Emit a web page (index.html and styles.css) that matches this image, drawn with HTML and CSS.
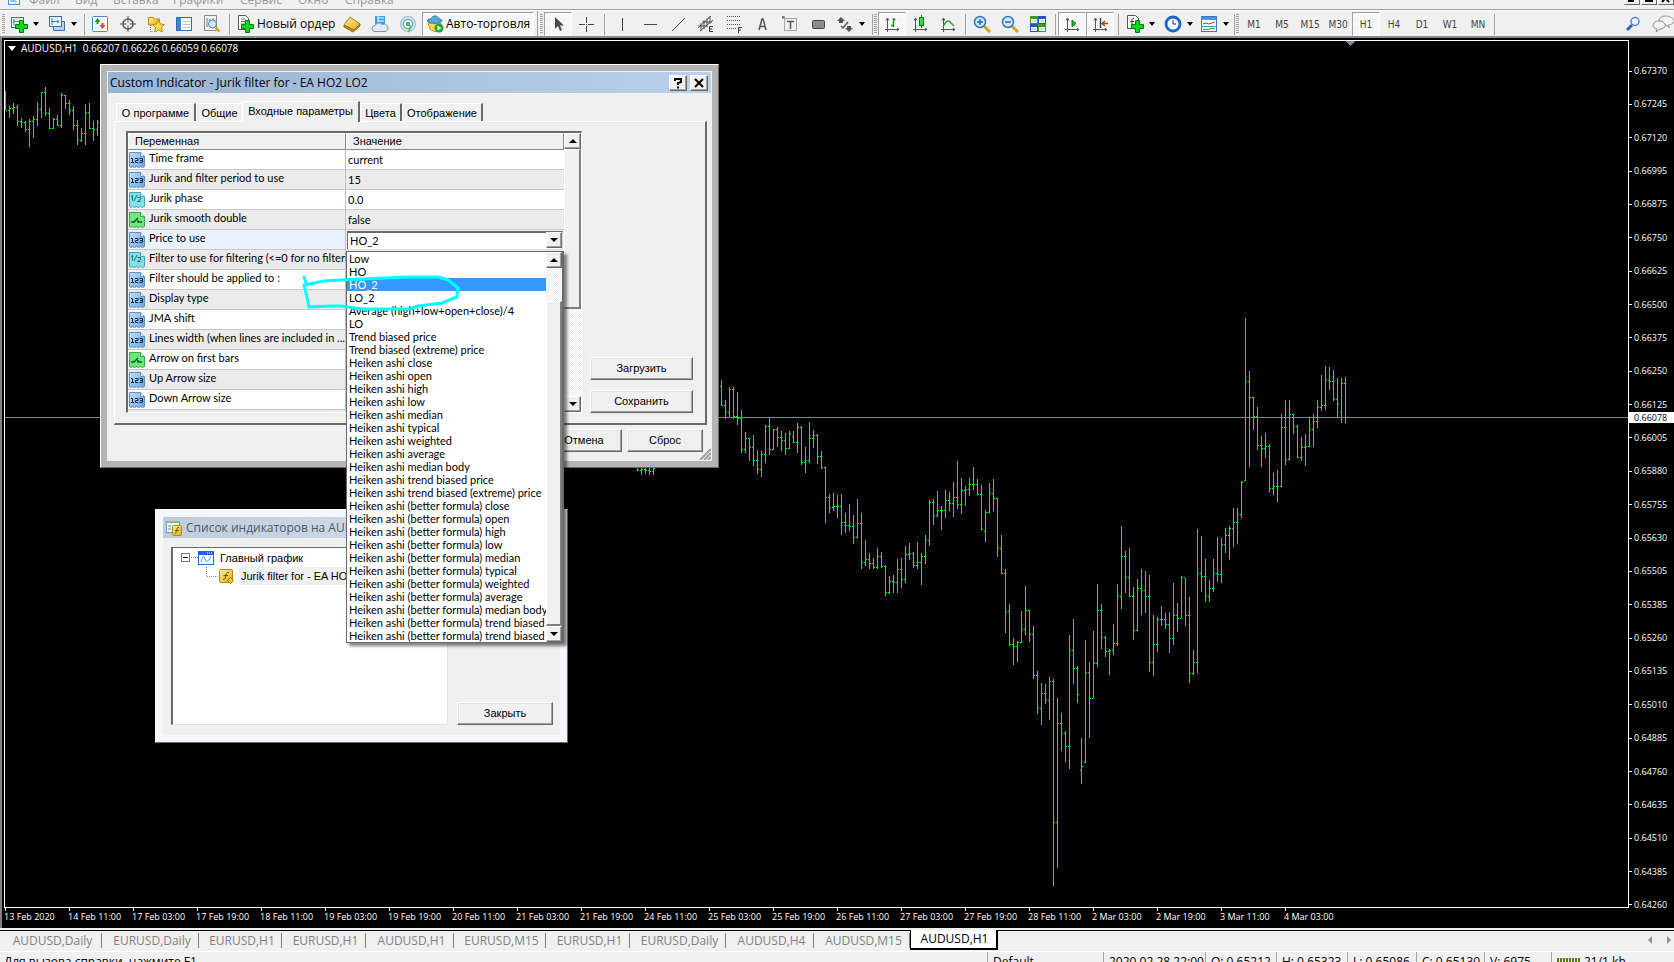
FILE: index.html
```html
<!DOCTYPE html>
<html lang="ru">
<head>
<meta charset="utf-8">
<title>AUDUSD,H1</title>
<link rel="stylesheet" href="styles.css">
</head>
<body>
<svg class="defs" aria-hidden="true">
  <defs>
    <linearGradient id="g-blue" x1="0" y1="0" x2="1" y2="1"><stop offset="0" stop-color="#c4ddf6"/><stop offset="1" stop-color="#6ba3dd"/></linearGradient>
    <linearGradient id="g-gold" x1="0" y1="0" x2="1" y2="1"><stop offset="0" stop-color="#fff0a0"/><stop offset="1" stop-color="#e0a81c"/></linearGradient>
    <symbol id="i-plus" viewBox="0 0 18 18"><path d="M9 7h4v4h4v4h-4v4h-4v-4H5v-4h4z" transform="translate(.5 -1.5)" fill="#10d820" stroke="#067a10"/></symbol>
    <symbol id="i-123" viewBox="0 0 16 16"><path d="M.5.5h11l4 4v10l-2 1-2-1-2 1-2-1-2 1-2-1-2 1-1-1z" fill="url(#g-blue)" stroke="#5b8fc4"/><path d="M11.500.5v4h4" fill="#e8f3fd" stroke="#5b8fc4"/><path d="M2 6.500h1.500v4M2 10.500h3M6 6.500h3v2H6.500v2H9M10.500 6.500h3v4h-3M11 8.500h2" fill="none" stroke="#0c2c54"/></symbol>
    <symbol id="i-half" viewBox="0 0 16 16"><path d="M.5.5h11l4 4v10l-2 1-2-1-2 1-2-1-2 1-2-1-2 1-1-1z" fill="#86dde6" stroke="#44a5b4"/><path d="M11.500.5v4h4" fill="#e8fbfd" stroke="#44a5b4"/><path d="M2 4.500l1.500-1v5M8 3L5 9M8.500 5.500h3v2l-3 2h3" fill="none" stroke="#1d6c80"/></symbol>
    <symbol id="i-bool" viewBox="0 0 16 16"><path d="M.5.5h11l4 4v10l-2 1-2-1-2 1-2-1-2 1-2-1-2 1-1-1z" fill="#6fe57f" stroke="#36a74a"/><path d="M11.500.5v4h4" fill="#d8fadd" stroke="#36a74a"/><path d="M2 10h3l4-4M9 8v2h4" fill="none" stroke="#0b5c1c" stroke-width="1.500"/></symbol>
    <symbol id="i-axes" viewBox="0 0 18 18"><path d="M4.500 3v14M2 14.500h14M3 5.500l1.500-2.500 1.500 2.500M14 13l2 1.500-2 1.500" fill="none" stroke="#555"/></symbol>
  </defs>
</svg>

<nav class="menubar">
  <svg class="menubar__logo" width="12" height="12"><rect x=".5" y=".5" width="11" height="11" fill="#fff" stroke="#4a86e8"/><path d="M3 9V5l2 4 2-5v5h2" fill="none" stroke="#7a9be0"/></svg>
  <a class="menu menu--file" href="#">Файл</a><a class="menu menu--view" href="#">Вид</a><a class="menu menu--insert" href="#">Вставка</a><a class="menu menu--charts" href="#">Графики</a><a class="menu menu--tools" href="#">Сервис</a><a class="menu menu--window" href="#">Окно</a><a class="menu" href="#">Справка</a>
  <div class="mdi">
    <button class="mdi__btn" aria-label="Свернуть"><svg width="12" height="12"><path d="M2 9h6" stroke="#000" stroke-width="2"/></svg></button>
    <button class="mdi__btn" aria-label="Развернуть"><svg width="12" height="12"><path d="M3 2h6v7H3z" fill="none" stroke="#000" stroke-width="2"/></svg></button>
    <button class="mdi__btn" aria-label="Закрыть окно"><svg width="12" height="12"><path d="M2 2l7 8M9 2L2 10" stroke="#000" stroke-width="2"/></svg></button>
  </div>
</nav>

<div class="toolbar">
  <i class="grip"></i>
  <button class="tool tool--drop" aria-label="Новый график"><svg viewBox="0 0 18 18"><rect x="1.500" y="2.500" width="12" height="10" fill="#e9f2fb" stroke="#3b6ea5"/><path d="M4 4v6M3 6.500h8M9 5l2 1.500L9 8" stroke="#5b7fa8" fill="none"/><use href="#i-plus"/></svg><i class="caret"></i></button>
  <button class="tool tool--drop" aria-label="Профили"><svg viewBox="0 0 18 18"><path d="M5.500 6.500h11v9h-11z" fill="#b9d2ec" stroke="#3b6ea5"/><rect x="1.500" y="1.500" width="12" height="10" fill="#e9f2fb" stroke="#3b6ea5"/><path d="M4 3v7M3 6.500h8M9 5l2 1.500L9 8" stroke="#5b7fa8" fill="none"/></svg><i class="caret"></i></button>
  <i class="sep sep--4"></i>
  <button class="tool" aria-label="Обзор рынка"><svg viewBox="0 0 18 18"><rect x="1.500" y="1.500" width="15" height="15" rx="1" fill="#fff" stroke="#4a86c8"/><path d="M3 5h12M3 9h12M3 13h12" stroke="#d5dde8"/><path d="M6.500 3L3.500 7h2v2h2V7h2z" fill="#12a024"/><path d="M11.500 14l3-4h-2V8h-2v2h-2z" fill="#e0431e"/></svg></button>
  <button class="tool" aria-label="Окно данных"><svg viewBox="0 0 18 18"><circle cx="9" cy="9" r="5" fill="none" stroke="#555" stroke-width="1.500"/><path d="M9 1v16M1 9h16" stroke="#555"/><rect x="7.500" y="7.500" width="3" height="3" fill="#f0f0f0"/></svg></button>
  <button class="tool" aria-label="Навигатор"><svg viewBox="0 0 18 18"><path d="M1.500 10V2.500h5l1 1.500h5V10z" fill="url(#g-gold)" stroke="#b98b1a"/><path d="M3.500 10v7M3.500 16.500H6" stroke="#777" stroke-dasharray="1 1"/><path d="M11.500 5l2 4 4 .5-3 3 .8 4.500-3.800-2-3.800 2 .8-4.500-3-3 4-.5z" fill="#ffd84a" stroke="#b8860b"/></svg></button>
  <button class="tool" aria-label="Терминал"><svg viewBox="0 0 18 18"><rect x="1.500" y="2.500" width="15" height="13" fill="#fff" stroke="#2d6cb5"/><path d="M2 3h4v12H2z" fill="#3f86d2"/><path d="M8 6.500h7M8 9.500h7M8 12.500h7" stroke="#b6c6d8"/></svg></button>
  <button class="tool" aria-label="Тестер"><svg viewBox="0 0 18 18"><path d="M1.500.5h12v15h-12z" fill="#f4f4f4" stroke="#888"/><path d="M4 3v9M7 4v6M10 3v4" stroke="#777"/><circle cx="9.500" cy="9" r="4" fill="#cfe6f8" stroke="#4a7ead"/><path d="M12.500 12.500l4 4" stroke="#d9a31a" stroke-width="2.500"/></svg></button>
  <i class="sep"></i>
  <button class="tool tool--text tool--order"><svg viewBox="0 0 18 18"><path d="M2.500.5h7l3 3v11h-10z" fill="#fff" stroke="#555"/><path d="M5 4h4M5 6.500h5M5 9h5" stroke="#666"/><use href="#i-plus"/></svg>Новый ордер</button>
  <button class="tool" aria-label="MetaEditor"><svg viewBox="0 0 18 18"><path d="M1 10l6-8 10 7-6 6z" fill="url(#g-gold)" stroke="#b27c10"/><path d="M1 10v2l9 5 7-6V9l-6 6z" fill="#c78d1a" stroke="#9a6b0a"/></svg></button>
  <button class="tool" aria-label="Облако"><svg viewBox="0 0 18 18"><path d="M4 1h10v10H4z" fill="#3ba0ea"/><path d="M7 1v6M7 3h6M7 6h6" stroke="#fff"/><path d="M4 16.500a3 3 0 0 1 0-6 4 4 0 0 1 7-1 3.500 3.500 0 0 1 4 7z" fill="#e3e9f2" stroke="#7f93b0"/></svg></button>
  <button class="tool" aria-label="Сигналы"><svg viewBox="0 0 18 18"><circle cx="9" cy="9" r="7.500" fill="none" stroke="#a6c6df" stroke-width="1.500"/><circle cx="9" cy="9" r="4.800" fill="none" stroke="#6faac0" stroke-width="1.500"/><circle cx="9" cy="9" r="2" fill="#35a84c"/><path d="M9 9c3 1 3 5 0 8" stroke="#4bbf5e" stroke-width="1.500" fill="none"/></svg></button>
  <button class="tool tool--text tool--auto is-pressed"><svg viewBox="0 0 18 18"><path d="M2 8h13l-2 6-4 3-5-3z" fill="#ffd75a" stroke="#c99419"/><path d="M1 6c1-2 3-2 4-2 1-4 7-4 8 0 2 0 3 1 3 2-3 3-12 3-15 0z" fill="#5ba6d8" stroke="#2f78ac"/><circle cx="13" cy="13" r="4.500" fill="#1da92d"/><path d="M11.500 10.500v5l4-2.500z" fill="#fff"/></svg>Авто-торговля</button>
  <i class="sep sep--group"></i><i class="grip"></i>
  <button class="tool is-pressed" aria-label="Курсор"><svg viewBox="0 0 18 18"><path d="M6 2v12l3-3 2 5 2-1-2-4.500h4z" fill="#4a4a4a"/></svg></button>
  <button class="tool" aria-label="Перекрестие"><svg viewBox="0 0 18 18"><path d="M9.500 2v6M9.500 11v6M2 9.500h6M11 9.500h6M9 9.500h1" stroke="#444"/></svg></button>
  <i class="sep sep--8"></i>
  <button class="tool" aria-label="Вертикальная линия"><svg viewBox="0 0 18 18"><path d="M9.500 3v13" stroke="#444"/></svg></button>
  <button class="tool" aria-label="Горизонтальная линия"><svg viewBox="0 0 18 18"><path d="M3 9.500h13" stroke="#444"/></svg></button>
  <button class="tool" aria-label="Трендовая линия"><svg viewBox="0 0 18 18"><path d="M3 16L16 3" stroke="#444"/></svg></button>
  <button class="tool" aria-label="Канал"><svg viewBox="0 0 18 18"><path d="M1 13L14 1M3 16L16 5M4 8v8M7 5v9M10 3v9M13 1v8M1 11h9M5 7h10" stroke="#555"/><path d="M16 11.500h-3.500v5H16M12.500 14H15" stroke="#333" fill="none"/></svg></button>
  <button class="tool" aria-label="Фибоначчи"><svg viewBox="0 0 18 18"><path d="M2 1.500h14M2 5.500h14M2 9.500h14M2 13.500h9" stroke="#555" stroke-dasharray="1 1"/><path d="M13.500 18v-5.500H17M13.500 15H16" stroke="#333" fill="none"/></svg></button>
  <button class="tool" aria-label="Текст"><svg viewBox="0 0 18 18"><path d="M6 15L9 4h1l3 11M7 11.500h5" stroke="#555" stroke-width="1.500" fill="none"/></svg></button>
  <button class="tool" aria-label="Метка"><svg viewBox="0 0 18 18"><rect x="3.500" y="3.500" width="12" height="12" fill="none" stroke="#555" stroke-dasharray="1 1"/><path d="M6 6.500h7M9.500 6v8" stroke="#555" stroke-width="1.500"/><path d="M1 2h3M2 1v3" stroke="#555"/></svg></button>
  <button class="tool" aria-label="Прямоугольник"><svg viewBox="0 0 18 18"><rect x="3.500" y="5.500" width="12" height="8" rx="1" fill="#8c8c8c" stroke="#444"/></svg></button>
  <button class="tool tool--drop" aria-label="Стрелки"><svg viewBox="0 0 18 18"><path d="M5 2l4 4H7v2H3V6H1zM13 17l-4-4h2v-2h4v2h2z" fill="#555"/><path d="M5 11l2 2 5-6" fill="none" stroke="#555" stroke-width="1.500"/></svg><i class="caret"></i></button>
  <i class="sep sep--4"></i><i class="grip"></i>
  <button class="tool is-pressed" aria-label="Бары"><svg viewBox="0 0 18 18"><use href="#i-axes"/><path d="M10.500 3v9M10.500 4.500h2M8 10.500h2" stroke="#0a9a1a" stroke-width="1.500"/></svg></button>
  <button class="tool" aria-label="Свечи"><svg viewBox="0 0 18 18"><use href="#i-axes"/><path d="M10.500 0v13" stroke="#0a7a14"/><rect x="8.500" y="2.500" width="4" height="8" fill="#2ee044" stroke="#0a7a14"/></svg></button>
  <button class="tool" aria-label="Линия"><svg viewBox="0 0 18 18"><use href="#i-axes"/><path d="M4 12c3-7 6-7 8-4l3 3" fill="none" stroke="#2fa33c" stroke-width="1.500"/></svg></button>
  <i class="sep"></i>
  <button class="tool" aria-label="Увеличить"><svg viewBox="0 0 18 18"><path d="M11 11l6 6" stroke="#d9a31a" stroke-width="3"/><circle cx="7" cy="7" r="5.500" fill="#cfe6fb" stroke="#3078be" stroke-width="1.500"/><path d="M4 7h6M7 4v6" stroke="#2a66a8" stroke-width="1.500"/></svg></button>
  <button class="tool" aria-label="Уменьшить"><svg viewBox="0 0 18 18"><path d="M11 11l6 6" stroke="#d9a31a" stroke-width="3"/><circle cx="7" cy="7" r="5.500" fill="#cfe6fb" stroke="#3078be" stroke-width="1.500"/><path d="M4 7h6" stroke="#2a66a8" stroke-width="1.500"/></svg></button>
  <button class="tool" aria-label="Окна плиткой"><svg viewBox="0 0 18 18"><path d="M1 1h8v8H1zM9 9h8v8H9z" fill="#3f9a14"/><path d="M9 1h8v8H9zM1 9h8v8H1z" fill="#1f56c4"/><path d="M2 4h6v4H2zM10 4h6v4h-6zM2 12h6v4H2zM10 12h6v4h-6z" fill="#eef4fb"/><path d="M3 6h4M11 6h4M3 14h4M11 14h4" stroke="#9cb"/></svg></button>
  <i class="sep"></i>
  <button class="tool is-pressed" aria-label="Автопрокрутка"><svg viewBox="0 0 18 18"><use href="#i-axes"/><path d="M9 5v7l4-3.500z" fill="#17b82a" stroke="#0a7a14"/></svg></button>
  <button class="tool is-pressed" aria-label="Сдвиг графика"><svg viewBox="0 0 18 18"><use href="#i-axes"/><path d="M9.500 3v10" stroke="#1c4e8a" stroke-width="1.500"/><path d="M17 8.500h-5M14 6l-3 2.500 3 2.500" stroke="#c03a10" fill="none" stroke-width="1.500"/></svg></button>
  <i class="sep sep--8"></i>
  <button class="tool tool--drop" aria-label="Индикаторы"><svg viewBox="0 0 18 18"><path d="M1.500.5h8l3 3v10h-11z" fill="#fff" stroke="#555"/><path d="M8 3.500c-2-1-2 1-2 2V11M4 6.500h4" stroke="#444" fill="none"/><use href="#i-plus"/></svg><i class="caret"></i></button>
  <button class="tool tool--drop tool--period" aria-label="Периоды"><svg viewBox="0 0 18 18"><circle cx="9" cy="9" r="7" fill="#eef5fc" stroke="#1967c0" stroke-width="2.800"/><path d="M9 5v4h3" stroke="#333" fill="none"/></svg><i class="caret"></i></button>
  <button class="tool tool--drop tool--period" aria-label="Шаблоны"><svg viewBox="0 0 18 18"><rect x="1.500" y="1.500" width="15" height="15" fill="#fff" stroke="#3b78bb"/><path d="M2 2h14v3H2z" fill="#4f93d8"/><path d="M3 9l3-1 3 1 3-1 3-1" stroke="#b33b12" fill="none"/><path d="M2 11.500h14" stroke="#5b8fc4"/><path d="M3 15l3-1 2 1 3-2 4 1" stroke="#24902f" fill="none"/></svg><i class="caret"></i></button>
  <i class="sep sep--4"></i><i class="grip"></i>
  <button class="tool tool--tf">M1</button><button class="tool tool--tf">M5</button><button class="tool tool--tf">M15</button><button class="tool tool--tf">M30</button><button class="tool tool--tf is-pressed">H1</button><button class="tool tool--tf">H4</button><button class="tool tool--tf">D1</button><button class="tool tool--tf">W1</button><button class="tool tool--tf">MN</button>
  <i class="sep sep--4"></i>
  <button class="tool tool--search" aria-label="Поиск"><svg viewBox="0 0 18 18"><path d="M3 15l5-5" stroke="#2b62c9" stroke-width="3"/><circle cx="11" cy="6.500" r="4" fill="#eef4ff" stroke="#4f83dc" stroke-width="1.500"/></svg></button>
  <button class="tool tool--chat" aria-label="Чат"><svg viewBox="0 0 22 18"><path d="M13 1c11 0 11 9 3 9l2 3-4-3c-9 0-9-9-1-9z" fill="#f4f4f4" stroke="#999"/><path d="M7 6c8 0 8 8 1 8l-4 3 1-3C-1 13 0 6 7 6z" fill="#f4f4f6" stroke="#889"/></svg></button>
</div>

<main class="desktop">
  <section class="plot">
    <svg id="bars" viewBox="5 41 1623 866" preserveAspectRatio="none" role="img" aria-label="AUDUSD H1">
      <path d="M5 417.500h1623" stroke="#778899"/>
      <path id="ohlc" d="" fill="none" stroke="#00ff00"/>
      <path d="M1345 41h10l-5 5z" fill="#778899"/>
    </svg>
    <p class="plot__title"><svg width="8" height="5"><path d="M0 0h8L4 5z" fill="#fff"/></svg><span>AUDUSD,H1&nbsp; 0.66207 0.66226 0.66059 0.66078</span></p>
  </section>
  <div class="prices" id="prices"><output class="prices__now">0.66078</output></div>
  <div class="times" id="times"></div>

  <section class="win win--list" aria-label="Список индикаторов">
    <header class="win__title"><svg width="16" height="16"><rect x=".5" y="1.500" width="13" height="11" fill="#eef6ff" stroke="#6b9bc8"/><path d="M1 2h13" stroke="#7fc67a" stroke-width="2"/><path d="M2 6h3M2 9h3" stroke="#5b8fc4"/><rect x="6.500" y="5.500" width="9" height="10" rx="1" fill="url(#g-gold)" stroke="#b48a1c"/><path d="M13 7.500c-2-.5-2 1-2.500 3s-.5 3-2 3M9 10.500h4" stroke="#7a5800" fill="none"/></svg>Список индикаторов на AUDUSD,H1</header>
    <div class="listing">
      <ul class="tree">
        <li class="tree__row"><svg class="tree__toggle" width="17" height="10"><rect x=".5" y=".5" width="8" height="8" fill="#fff" stroke="#777"/><path d="M2 4.500h5" stroke="#000"/><path d="M10 4.500h7" stroke="#888" stroke-dasharray="1 1"/></svg><svg width="16" height="14"><rect x=".5" y=".5" width="15" height="13" fill="#fff" stroke="#2b6be0"/><path d="M0 0h16v4H0z" fill="#1f62dd"/><path d="M9 2h6" stroke="#fff" stroke-dasharray="1 1"/><path d="M3 11c2-7 3-7 4-3s3 3 6-3" stroke="#5b84d8" fill="none"/></svg><span>Главный график</span></li>
        <li class="tree__row tree__row--child"><svg width="12" height="18"><path d="M.5 0v9.500h11" fill="none" stroke="#888" stroke-dasharray="1 1"/></svg><svg width="16" height="16"><rect x=".5" y="1.500" width="13" height="13" rx="1" fill="url(#g-gold)" stroke="#b48a1c"/><path d="M10 4.500c-2.500-.5-2.500 1-3 3s-1 4-3 4M4.500 7.500H9" stroke="#6b4c00" fill="none"/><path d="M11.500 9.500l3 3-3 3-3-3z" fill="#f1c84a" stroke="#9a7408"/></svg><span class="tree__sel">Jurik filter for - EA HO2 LO2</span></li>
      </ul>
      <button class="btn btn--close">Закрыть</button>
    </div>
  </section>

  <section class="win win--props" aria-label="Custom Indicator">
    <header class="win__title">Custom Indicator - Jurik filter for - EA HO2 LO2<button class="win__btn" aria-label="Справка"><svg width="12" height="12"><path d="M3 4V2h6v3L6 6v2M6 9.500v2" fill="none" stroke="#000" stroke-width="2"/></svg></button><button class="win__btn" aria-label="Закрыть"><svg width="12" height="12"><path d="M2 2l8 8M10 2l-8 8" stroke="#000" stroke-width="2"/></svg></button></header>
    <div class="tabs"><button class="tab tab--about">О программе</button><button class="tab tab--common">Общие</button><button class="tab tab--inputs is-active">Входные параметры</button><button class="tab tab--colors">Цвета</button><button class="tab tab--view">Отображение</button></div>
    <div class="panel">
      <div class="params">
        <table class="grid">
          <thead><tr><th class="grid__name">Переменная</th><th>Значение</th></tr></thead>
          <tbody>
            <tr><td><svg><use href="#i-123"/></svg>Time frame</td><td>current</td></tr>
            <tr><td><svg><use href="#i-123"/></svg>Jurik and filter period to use</td><td>15</td></tr>
            <tr><td><svg><use href="#i-half"/></svg>Jurik phase</td><td>0.0</td></tr>
            <tr><td><svg><use href="#i-bool"/></svg>Jurik smooth double</td><td>false</td></tr>
            <tr class="is-current"><td><svg><use href="#i-123"/></svg><label for="price">Price to use</label></td><td class="grid__combo"><select id="price" class="combo"><option>HO_2</option><option>LO_2</option></select><i class="combo__arrow"></i></td></tr>
            <tr><td><svg><use href="#i-half"/></svg>Filter to use for filtering (&lt;=0 for no filteri...</td><td></td></tr>
            <tr><td><svg><use href="#i-123"/></svg>Filter should be applied to :</td><td></td></tr>
            <tr><td><svg><use href="#i-123"/></svg>Display type</td><td></td></tr>
            <tr><td><svg><use href="#i-123"/></svg>JMA shift</td><td></td></tr>
            <tr><td><svg><use href="#i-123"/></svg>Lines width (when lines are included in ...</td><td></td></tr>
            <tr><td><svg><use href="#i-bool"/></svg>Arrow on first bars</td><td></td></tr>
            <tr><td><svg><use href="#i-123"/></svg>Up Arrow size</td><td></td></tr>
            <tr><td><svg><use href="#i-123"/></svg>Down Arrow size</td><td></td></tr>
            <tr><td></td><td></td></tr>
          </tbody>
        </table>
        <div class="scroll"><button class="scroll__btn scroll__btn--up" aria-label="Вверх"></button><div class="scroll__thumb scroll__thumb--grid"></div><button class="scroll__btn scroll__btn--down" aria-label="Вниз"></button></div>
      </div>
      <div class="side"><button class="btn">Загрузить</button><button class="btn">Сохранить</button></div>
    </div>
    <footer class="actions"><button class="btn btn--sm">OK</button><button class="btn btn--sm">Отмена</button><button class="btn btn--sm">Сброс</button></footer>
    <svg class="sizer" width="12" height="12"><path d="M1 12L12 1M5 12l7-7M9 12l3-3" stroke="#a0a0a0" stroke-width="2"/></svg>

    <div class="drop">
      <ul class="drop__items" role="listbox">
        <li>Low</li><li>HO</li><li class="is-selected">HO_2</li><li>LO_2</li><li>Average (high+low+open+close)/4</li><li>LO</li><li>Trend biased price</li><li>Trend biased (extreme) price</li><li>Heiken ashi close</li><li>Heiken ashi open</li><li>Heiken ashi high</li><li>Heiken ashi low</li><li>Heiken ashi median</li><li>Heiken ashi typical</li><li>Heiken ashi weighted</li><li>Heiken ashi average</li><li>Heiken ashi median body</li><li>Heiken ashi trend biased price</li><li>Heiken ashi trend biased (extreme) price</li><li>Heiken ashi (better formula) close</li><li>Heiken ashi (better formula) open</li><li>Heiken ashi (better formula) high</li><li>Heiken ashi (better formula) low</li><li>Heiken ashi (better formula) median</li><li>Heiken ashi (better formula) typical</li><li>Heiken ashi (better formula) weighted</li><li>Heiken ashi (better formula) average</li><li>Heiken ashi (better formula) median body</li><li>Heiken ashi (better formula) trend biased price</li><li>Heiken ashi (better formula) trend biased (extreme) price</li>
      </ul>
      <div class="scroll scroll--drop"><button class="scroll__btn scroll__btn--up" aria-label="Вверх"></button><div class="scroll__thumb scroll__thumb--drop"></div><button class="scroll__btn scroll__btn--down" aria-label="Вниз"></button></div>
    </div>
    <svg class="mark" viewBox="300 272 162 40"><path d="M303 276l3 8M303 284l20-4 17-1 67-3h30l10 3 10 8-1 9-15 6-24 3-8 3h-48l-21-3h-10l-22 1-2-10-3-12" fill="none" stroke="#00ffff" stroke-width="3" stroke-linecap="round" stroke-linejoin="round"/></svg>
  </section>
</main>

<nav class="charts">
  <a href="#">AUDUSD,Daily</a><a href="#">EURUSD,Daily</a><a href="#">EURUSD,H1</a><a href="#">EURUSD,H1</a><a href="#">AUDUSD,H1</a><a href="#">EURUSD,M15</a><a href="#">EURUSD,H1</a><a href="#">EURUSD,Daily</a><a href="#">AUDUSD,H4</a><a href="#">AUDUSD,M15</a><a href="#" class="is-active">AUDUSD,H1</a>
  <svg class="charts__arrows" width="24" height="10"><path d="M4 1v8L0 5zM19 1v8l4-4z" fill="#909090"/></svg>
</nav>
<footer class="status">
  <span>Для вызова справки, нажмите F1</span><span>Default</span><span>2020.02.28 22:00</span><span>O: 0.65212</span><span>H: 0.65323</span><span>L: 0.65086</span><span>C: 0.65130</span><span>V: 6975</span><span><svg width="24" height="12"><path d="M1 0v12M4 0v12M7 0v12M10 0v12M13 0v12" stroke="#5a7a10" stroke-width="2"/><path d="M16 0v9M19 0v7M22 0v5" stroke="#5a7a10" stroke-width="2"/><path d="M16 9v3M19 7v5M22 5v7" stroke="#1a4a6a" stroke-width="2"/></svg>21/1 kb</span>
</footer>
<script src="chart.js"></script>
</body>
</html>
```
FILE: styles.css
```css
* { box-sizing: border-box; }
body { margin: 0; height: 100vh; overflow: hidden; display: flex; flex-direction: column; background: #f0f0f0; font: 11px/13px "Liberation Sans", sans-serif; color: #000; }
button { font: inherit; color: inherit; margin: 0; padding: 0; border: 0; background: none; }
ul, p { margin: 0; padding: 0; list-style: none; }
a { color: inherit; text-decoration: none; }
svg { flex: none; display: block; }
.defs { position: absolute; width: 0; height: 0; }

.menubar { height: 10px; flex: none; overflow: hidden; display: flex; align-items: flex-end; padding: 0 0 1px 8px; border-bottom: 1px solid #a0a0a0; font: 12px/16px "Open Sans", sans-serif; color: #9a9a9a; }
.menubar__logo { margin-right: 9px; margin-bottom: -4px; }
.menu--file { width: 46px; } .menu--view { width: 38px; } .menu--insert { width: 60px; } .menu--charts { width: 67px; } .menu--tools { width: 58px; } .menu--window { width: 47px; }
.mdi { margin-left: auto; display: flex; gap: 1px; padding-bottom: 3px; }
.mdi__btn { width: 16px; height: 14px; padding: 0 1px; border: 1px solid #fff; border-right-color: #696969; border-bottom-color: #696969; background: #f0f0f0; }
.menubar__logo { margin-bottom: 3px; }

.toolbar { height: 28px; flex: none; display: flex; align-items: center; overflow: hidden; padding: 1px 0 0 2px; border-top: 1px solid #fff; border-bottom: 2px solid #8a8a8a; }
.grip { flex: none; width: 4px; height: 20px; background: repeating-linear-gradient(#a0a0a0 0 1px, #f0f0f0 1px 2px); border-right: 1px solid #f0f0f0; }
.sep { flex: none; width: 6px; height: 21px; display: flex; justify-content: center; }
.sep::before { content: ""; width: 1px; background: #a0a0a0; }
.sep--4 { width: 4px; } .sep--8 { width: 8px; }
.sep--group { height: 26px; }
.tool { flex: none; width: 28px; height: 24px; display: flex; align-items: center; justify-content: center; }
.tool svg { width: 18px; height: 18px; }
.tool.is-pressed { border: 1px solid #fff; border-top-color: #a0a0a0; border-left-color: #a0a0a0; background: repeating-conic-gradient(#fff 0 25%, #f0f0f0 0 50%) 0 0 / 2px 2px; background-clip: padding-box; }
.tool--drop { width: 38px; justify-content: flex-start; gap: 5px; padding-left: 4px; }
.tool--period { width: 36px; }
.caret { border: 3px solid transparent; border-top: 4px solid #000; border-bottom: 0; }
.tool--text { font: 12px/16px "Open Sans", sans-serif; gap: 3px; justify-content: flex-start; padding-left: 4px; white-space: nowrap; }
.tool--order { width: 106px; } .tool--auto { width: 112px; padding-left: 3px; gap: 2px; }
.tool--tf { font: 10px/13px "DejaVu Sans Condensed", "DejaVu Sans", sans-serif; color: #444; }
.tool--search { margin-left: auto; margin-right: 5px; }
.tool--chat { width: 22px; }
.tool--chat svg { width: 22px; }

.desktop { position: relative; flex: 1; min-height: 0; display: grid; grid-template: minmax(0, 1fr) 20px / minmax(0, 1fr) 45px; padding: 2px 0 0 2px; border-left: 2px solid #808080; background: #000; color: #fff; }
.plot { position: relative; border: 1px solid #fff; min-height: 0; }
.plot > svg { width: 100%; height: 100%; shape-rendering: crispEdges; }
.plot__title { position: absolute; left: 3px; top: 1px; display: flex; align-items: center; gap: 5px; font: 10px/13px "Open Sans", sans-serif; }
.prices { position: relative; display: flex; flex-direction: column; justify-content: space-between; margin-bottom: -3px; padding: 25px 0 0; font: 9px/12px "Open Sans", sans-serif; }
.prices span { display: flex; align-items: center; gap: 2px; }
.prices span::before { content: ""; width: 3px; height: 1px; background: #fff; }
.prices__now { position: absolute; left: 0; right: 0; top: 372px; padding-left: 5px; line-height: 11px; background: #fff; color: #000; }
.times { grid-column: 1 / -1; display: flex; font: 9px/12px "Open Sans", sans-serif; white-space: nowrap; }
.times span { flex: none; width: 64px; }
.times span::before { content: ""; display: block; width: 1px; height: 3px; margin-left: 1px; background: #fff; }

.win { position: absolute; display: flex; flex-direction: column; color: #000; background: #f0f0f0; border: 1px solid #fff; border-right-color: #696969; border-bottom-color: #696969; }
.win__title { display: flex; align-items: center; height: 21px; white-space: nowrap; font: 12px/16px "Open Sans", sans-serif; }
.win--props { left: 98px; top: 26px; width: 619px; height: 404px; box-shadow: inset 0 0 0 6px #b4b4b4; padding: 7px; }
.win--props .win__title { background: linear-gradient(90deg, #99b4d1, #b9d1ea); padding: 0 3px 0 2px; gap: 3px; flex: none; }
.win__title button:first-of-type { margin-left: auto; }
.win__btn { width: 18px; height: 16px; padding: 1px 2px; background: #f0f0f0; border: 1px solid #fff; border-right-color: #696969; border-bottom-color: #696969; box-shadow: inset -1px -1px #a0a0a0; }
.tabs { display: flex; align-items: flex-end; margin: 8px 0 0 8px; height: 20px; flex: none; }
.tab { height: 18px; padding-top: 1px; border: 1px solid #fff; border-bottom: 0; border-right: 2px solid #696969; white-space: nowrap; }
.tab--about { width: 80px; } .tab--common { width: 46px; border-right-width: 0; } .tab--inputs { width: 118px; } .tab--colors { width: 42px; } .tab--view { width: 81px; }
.tab.is-active { height: 21px; margin-bottom: -1px; background: #f0f0f0; position: relative; padding-bottom: 3px; }
.panel { display: flex; gap: 8px; margin: 0 4px 0 6px; padding: 9px 12px 10px 11px; border: 1px solid #fff; border-right: 2px solid #696969; border-bottom: 2px solid #696969; }
.params { display: flex; width: 456px; height: 282px; overflow: hidden; border: 1px solid #fff; border-top: 2px solid #696969; border-left: 2px solid #696969; background: #fff; }
.grid { flex: none; width: 436px; table-layout: fixed; border-collapse: separate; border-spacing: 0; align-self: flex-start; }
.grid th { height: 17px; padding: 0 0 0 6px; font-weight: normal; text-align: left; background: #f0f0f0; border: 1px solid #fff; border-right-color: #888; border-bottom-color: #888; }
.grid .grid__name { width: 218px; }
.grid td { height: 20px; padding: 0 0 0 2px; white-space: nowrap; border-bottom: 1px solid #c8c8c8; font-family: Lato, sans-serif; }
.grid td:first-child { border-right: 1px solid #c0c0c0; padding-left: 1px; }
.grid td svg { width: 16px; height: 16px; display: inline-block; vertical-align: middle; margin-right: 4px; }
.grid tr:nth-child(even) td { background: #ebebeb; }
.grid .is-current td { background: #e8f3ff; }
.grid .grid__combo { position: relative; padding: 0; border: 0; }
.combo { appearance: none; display: block; width: 216px; height: 19px; margin-left: 1px; padding: 0 0 0 2px; border: 1px solid #e0e0e0; border-top: 2px solid #696969; border-left: 1px solid #696969; border-radius: 0; background: #fff; font: inherit; color: #000; }
.combo__arrow, .scroll__btn { width: 16px; height: 16px; flex: none; display: grid; place-items: center; background: #f0f0f0; border: 1px solid #fff; border-right-color: #696969; border-bottom-color: #696969; box-shadow: inset -1px -1px #a0a0a0; }
.combo__arrow { position: absolute; right: 2px; top: 2px; }
.combo__arrow::before, .scroll__btn::before { content: ""; border: 4px solid transparent; border-top-color: #000; border-bottom: 0; }
.scroll .scroll__btn--up::before { border-top: 0; border-bottom: 4px solid #000; }
.scroll { width: 17px; flex: none; display: flex; flex-direction: column; background: repeating-conic-gradient(#fff 0 25%, #ebebeb 0 50%) 0 0 / 2px 2px; }
.scroll__btn { width: 100%; }
.scroll__btn--down { margin-top: auto; }
.scroll__thumb { background: #f0f0f0; border: 1px solid #fff; border-right: 2px solid #808080; border-bottom: 2px solid #808080; }
.scroll__thumb--grid { height: 160px; }
.side { flex: 1; display: flex; flex-direction: column; justify-content: flex-end; gap: 10px; }
.btn { height: 23px; background: #f0f0f0; border: 1px solid #fff; border-right-color: #696969; border-bottom-color: #696969; box-shadow: inset -1px -1px #a0a0a0, inset 1px 1px #e3e3e3; }
.actions { display: flex; justify-content: flex-end; gap: 5px; padding: 4px 8px 0 0; }
.btn--sm { width: 76px; }
.sizer { position: absolute; right: 7px; bottom: 7px; }
.drop { position: absolute; left: 245px; top: 186px; width: 218px; display: flex; background: #fff; border: 1px solid #696969; border-right-width: 2px; box-shadow: 3px 3px 3px rgba(0, 0, 0, .5); font-family: Lato, sans-serif; }
.drop__items { flex: 1; min-width: 0; overflow: hidden; }
.drop__items li { height: 13px; padding-left: 2px; line-height: 13px; white-space: nowrap; }
.drop__items .is-selected { background: #3399ff; color: #fff; }
.scroll--drop { width: 16px; }
.scroll__thumb--drop { flex: 1; margin-top: 33px; }
.mark { position: absolute; left: 200px; top: 208px; width: 162px; height: 40px; }

.win--list { left: 153px; top: 471px; width: 413px; height: 234px; box-shadow: inset 0 0 0 7px #f4f7fc; padding: 7px; }
.win--list .win__title { flex: none; gap: 4px; padding-left: 3px; color: #505860; background: linear-gradient(90deg, #bfcddb, #d7e4f2); }
.listing { flex: 1; display: flex; align-items: flex-end; gap: 9px; padding: 9px 7px 10px 8px; }
.tree { flex: 1; align-self: stretch; background: #fff; border: 1px solid #e3e3e3; border-top-color: #696969; border-left: 2px solid #696969; padding: 1px 0 0 8px; overflow: hidden; }
.tree__row { display: flex; align-items: center; height: 18px; gap: 6px; white-space: nowrap; }
.tree__toggle { margin-right: -6px; }
.tree__row--child { padding-left: 25px; gap: 1px; }
.tree__sel { flex: 1; margin-left: 3px; padding-left: 2px; line-height: 18px; background: #f0f0f0; }
.btn--close { width: 96px; }

.charts { flex: none; height: 22px; margin-top: 2px; display: grid; grid-template-columns: 102px 97px 83px 84px 88px 92px 84px 96px 88px 96px 88px 1fr; border-top: 1px solid #000; border-bottom: 1px solid #fff; color: #808080; font: 12px/18px "Open Sans", sans-serif; align-items: start; text-align: center; }
.charts a { padding-left: 4px; border-right: 1px solid #808080; line-height: 15px; margin-top: 2px; white-space: nowrap; }
.charts .is-active { margin-top: -1px; padding-left: 2px; line-height: 18px; color: #000; background: #fff; border: 1px solid #000; border-top: 0; border-right-width: 2px; border-bottom-width: 2px; }
.charts__arrows { justify-self: end; margin: 4px 2px 0 0; }
.status { flex: none; height: 10px; overflow: hidden; display: grid; grid-template-columns: 1fr 116px 102px 71px 71px 69px 68px 67px 123px; font: 12px/16px "Open Sans", sans-serif; }
.status span { height: 22px; padding: 2px 0 0 5px; border-left: 1px solid #a0a0a0; display: flex; gap: 3px; white-space: nowrap; }
.status span:first-child { border: 0; padding-left: 4px; }
.status svg { margin-top: 4px; }
```
FILE: chart.js
```js
// Each bar: high, low, close and, where it differs from the previous close, open.
const segments = [
  [5, '91 110 110|106 118 108|103 114 107|105 126 121|118 128 122|121 132 129|119 147 121|116 138 119|102 126 109|92 118 92|87 116 113|108 129 128|118 129 119|115 126 125|93 128 95|95 109 103|100 115 110|106 130 125|120 145 140|128 142 133|104 145 112|103 129 128|121 141 129|120 136 122'],
  [637, '460 471 470|460 475 469|460 474 470|460 475 471|460 475 468'],
  [721, '380 406 405 386|400 419 412|387 417 389|387 419 416|392 425 418|410 453 449|432 453 438|438 461 447|435 466 460|450 474 469|451 477 454|425 463 426|418 455 449|429 450 429|427 447 437|431 451 440|433 455 448|431 449 433|431 443 442 436|423 453 427|426 465 462|447 473 460|422 463 438|430 448 435|434 464 456|451 469 467|467 523 497|494 513 507|493 511 506|495 518 506|494 535 522|513 533 525|504 531 526|515 544 537|499 538 523|513 569 562|540 566 559|553 569 563|558 569 567|548 569 556|552 568 566|565 596 592|576 594 581|575 593 582|559 593 569|558 588 579|546 583 554|543 560 553|552 568 565|542 569 562|553 585 556|535 564 540|500 546 502|499 525 515|491 517 510|506 530 510|490 518 500|492 511 503|482 517 497|461 509 504|478 514 490|486 506 489|478 496 484|467 490 484|479 495 494|485 530 529|510 542 512 531|483 513 493|479 511 498|498 557 548|535 574 573|569 633 611|604 646 644|638 665 646|641 662 642|611 643 629|586 635 610|610 642 634|626 679 675|671 714 708|683 725 693|684 704 700|677 720 681|679 886 822|698 868 723|713 751 733|731 762 746|635 769 650|619 684 668|666 703 694|738 784 766 770|640 763 672 762|662 738 698|631 698 663|584 667 610|604 649 637|636 657 651|649 675 650|624 655 643|584 646 596|526 609 556|551 593 577|548 597 596|587 640 630|579 631 588|569 615 590|571 613 596|575 672 662|615 676 644|617 652 619|606 626 619|613 629 624|612 653 638|583 645 615|603 632 618|576 618 577|578 626 615|597 683 673|650 675 662|529 673 573|536 592 576|559 602 596|580 602 588|559 592 573|537 582 574|538 583 544|528 553 535|526 560 528|508 547 522|508 544 514|481 518 482|318 481 381 480|371 467 397|397 430 416|407 450 445|436 467 448|433 458 446|444 492 488|473 495 486|470 502 486|414 487 427|400 465 459|400 460 414|414 434 426|425 458 457|437 461 447|434 466 446|417 447 429|414 447 421|400 428 407|375 411 405|366 410 380|367 390 381|370 401 399|378 418 403|378 423 383 412|377 423 417']
];
let d = '';
for (const [start, data] of segments) {
  let prev = null;
  data.split('|').forEach((bar, i) => {
    const [high, low, close, open] = bar.split(' ').map(Number);
    const x = start + i * 4;
    const o = open || prev;
    d += `M${x + .5} ${high}V${low}M${x + 1} ${close + .5}h1`;
    if (o) d += `M${x - 1} ${o + .5}h1`;
    prev = close;
  });
}
document.getElementById('ohlc').setAttribute('d', d);

const fill = (id, labels) => {
  const box = document.getElementById(id);
  for (const text of labels) {
    const el = document.createElement('span');
    el.textContent = text;
    box.append(el);
  }
};
fill('prices', '0.67370 0.67245 0.67120 0.66995 0.66875 0.66750 0.66625 0.66500 0.66375 0.66250 0.66125 0.66005 0.65880 0.65755 0.65630 0.65505 0.65385 0.65260 0.65135 0.65010 0.64885 0.64760 0.64635 0.64510 0.64385 0.64260'.split(' '));
fill('times', ['13 Feb 2020', '14 Feb 11:00', '17 Feb 03:00', '17 Feb 19:00', '18 Feb 11:00', '19 Feb 03:00', '19 Feb 19:00', '20 Feb 11:00', '21 Feb 03:00', '21 Feb 19:00', '24 Feb 11:00', '25 Feb 03:00', '25 Feb 19:00', '26 Feb 11:00', '27 Feb 03:00', '27 Feb 19:00', '28 Feb 11:00', '2 Mar 03:00', '2 Mar 19:00', '3 Mar 11:00', '4 Mar 03:00']);
```
